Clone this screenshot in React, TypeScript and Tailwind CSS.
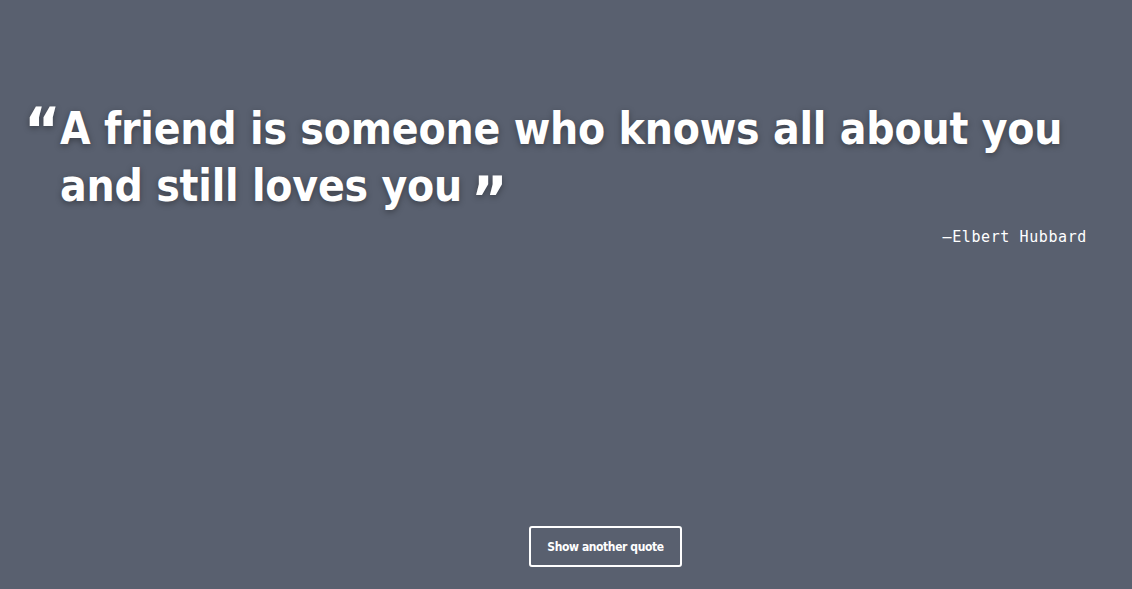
export default function App() {
	const QUOTE_FONT = '"DejaVu Sans Condensed", "DejaVu Sans", sans-serif';
	return (
		<div className="flex h-[589px] w-full flex-col bg-[#59606f] text-white">
			{/* Quote */}
			<div className="flex pl-6 pr-[45px] pt-[100px]">
				<span
					className="w-9 shrink-0 text-[62px] font-bold leading-[62px] tracking-[-3px] font-stretch-condensed [text-shadow:0_2px_6px_rgba(0,0,0,0.35)]"
					style={{ fontFamily: QUOTE_FONT }}>
					“
				</span>
				<div className="flex-1">
					<blockquote
						className="text-[44px] font-bold leading-[57px] tracking-[-0.2px] font-stretch-condensed [text-shadow:0_2px_6px_rgba(0,0,0,0.35)]"
						style={{ fontFamily: QUOTE_FONT }}>
						A friend is someone who knows all about you and still loves you
						<span className="ml-[9px] inline-block translate-y-[20px] text-[62px] leading-[0] tracking-[-3px]">”</span>
					</blockquote>
					<p className="mt-[12px] text-right font-['DejaVu_Sans_Mono',monospace] text-[15px] tracking-[0.6px]">
						—Elbert Hubbard
					</p>
				</div>
			</div>

			{/* Action */}
			<div className="mt-auto flex justify-center pb-[22px] pl-[79px]">
				<button
					className="h-[41px] w-[153px] rounded-[3px] border-2 border-white text-[12px] font-bold tracking-[-0.4px] font-stretch-condensed text-white"
					style={{ fontFamily: QUOTE_FONT }}>
					Show another quote
				</button>
			</div>
		</div>
	);
}
